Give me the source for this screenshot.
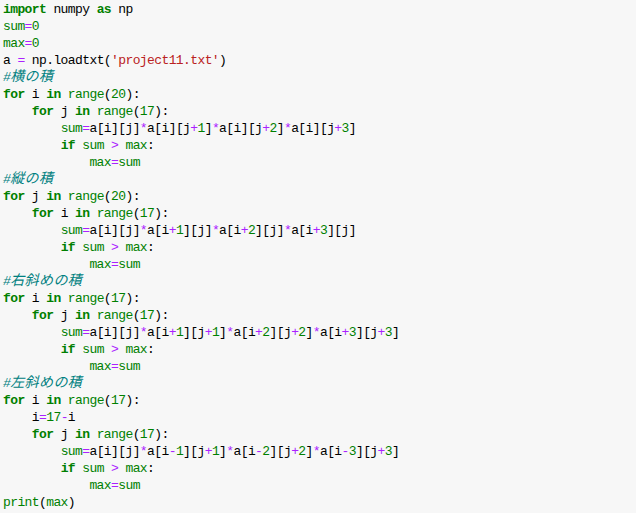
const code = `import numpy as np
sum=0
max=0
a = np.loadtxt('project11.txt')
#横の積
for i in range(20):
    for j in range(17):
        sum=a[i][j]*a[i][j+1]*a[i][j+2]*a[i][j+3]
        if sum > max:
            max=sum
#縦の積
for j in range(20):
    for i in range(17):
        sum=a[i][j]*a[i+1][j]*a[i+2][j]*a[i+3][j]
        if sum > max:
            max=sum
#右斜めの積
for i in range(17):
    for j in range(17):
        sum=a[i][j]*a[i+1][j+1]*a[i+2][j+2]*a[i+3][j+3]
        if sum > max:
            max=sum
#左斜めの積
for i in range(17):
    i=17-i
    for j in range(17):
        sum=a[i][j]*a[i-1][j+1]*a[i-2][j+2]*a[i-3][j+3]
        if sum > max:
            max=sum
print(max)`;

const keywords = ["for", "in", "import", "as", "if"];
const builtins = ["sum", "max", "range", "print"];

const tokenRe = /('[^']*')|([A-Za-z_]\w*)|(\d+)|([=*+\->])|(\s+)|(.)/g;

function renderLine(line: string) {
  if (line.startsWith("#")) {
    // comment: CJK glyphs are double width in the original
    const parts = line.split(/([\u3000-\u9fff]+)/);
    return (
      <span className="italic text-[#008080]">
        {parts.map((p, i) =>
          /[\u3000-\u9fff]/.test(p) ? (
            <span key={i} className="text-[14px] tracking-[0.4px]">
              {p}
            </span>
          ) : (
            <span key={i}>{p}</span>
          )
        )}
      </span>
    );
  }
  const out: JSX.Element[] = [];
  let m: RegExpExecArray | null;
  let k = 0;
  tokenRe.lastIndex = 0;
  while ((m = tokenRe.exec(line))) {
    const [t, str, word, num, op] = m;
    let cls = "";
    if (str) cls = "text-[#ba2121]";
    else if (word && keywords.includes(word)) cls = "font-bold text-[#008000]";
    else if (word && builtins.includes(word)) cls = "text-[#008000]";
    else if (num) cls = "text-[#008000]";
    else if (op) cls = "text-[#aa22ff]";
    out.push(
      <span key={k++} className={cls}>
        {t}
      </span>
    );
  }
  return out;
}

export default function App() {
  return (
    <div className="w-[636px] h-[513px] bg-[#f7f7f7] overflow-hidden">
      <pre className="pl-[3px] pt-[1px] text-[13px] tracking-[-0.6px] leading-[17px] text-black font-['Liberation_Mono','Noto_Sans_CJK_JP',monospace]">
        {code.split("\n").map((line, i) => (
          <div key={i} className="h-[17px] whitespace-pre">
            {renderLine(line)}
          </div>
        ))}
      </pre>
    </div>
  );
}
